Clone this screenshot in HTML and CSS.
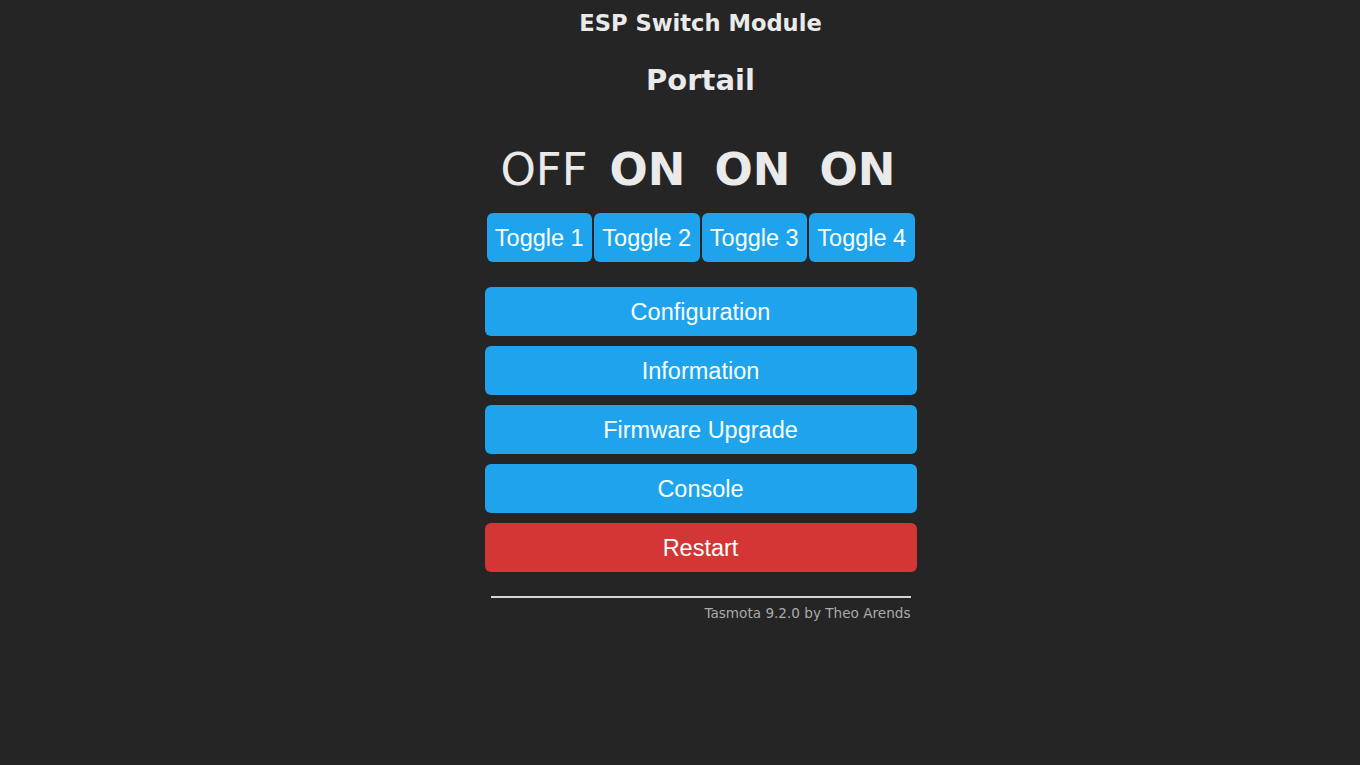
FILE: index.html
```html
<!DOCTYPE html>
<html lang="fr">
<head>
<meta charset="utf-8">
<title>ESP Switch Module - Portail</title>
<link rel="stylesheet" href="styles.css">
</head>
<body>
<div class="page">
  <div class="main">
    <header class="head">
      <h3 class="module">ESP Switch Module</h3>
      <h2 class="device">Portail</h2>
    </header>
    <div class="states">
      <div class="state off">OFF</div>
      <div class="state on">ON</div>
      <div class="state on">ON</div>
      <div class="state on">ON</div>
    </div>
    <div class="toggles">
      <button class="btn toggle">Toggle 1</button>
      <button class="btn toggle">Toggle 2</button>
      <button class="btn toggle">Toggle 3</button>
      <button class="btn toggle">Toggle 4</button>
    </div>
    <div class="menu">
      <button class="btn wide">Configuration</button>
      <button class="btn wide">Information</button>
      <button class="btn wide">Firmware Upgrade</button>
      <button class="btn wide">Console</button>
      <button class="btn wide danger">Restart</button>
    </div>
    <footer class="foot">
      <hr class="rule">
      <a class="credit" href="#">Tasmota 9.2.0 by Theo Arends</a>
    </footer>
  </div>
</div>
</body>
</html>
```

FILE: styles.css
```css
html, body {
  margin: 0;
  padding: 0;
  background: #252525;
  color: #eaeaea;
  font-family: "DejaVu Sans", Verdana, sans-serif;
}

.page {
  display: flex;
  justify-content: center;
  padding-left: 41px;
}

.main {
  width: 432px;
  display: flex;
  flex-direction: column;
}

.head {
  text-align: center;
}

.module {
  margin: 9px 0 0;
  font-size: 22.6px;
  line-height: 28px;
  font-weight: bold;
}

.device {
  margin: 26px 0 0;
  font-size: 29px;
  line-height: 34px;
  font-weight: bold;
}

.states {
  margin-top: 46px;
  display: grid;
  grid-template-columns: repeat(4, 1fr);
  column-gap: 2px;
  padding: 0 7.5px 0 6.5px;
  align-items: baseline;
}

.state {
  text-align: center;
  font-family: "DejaVu Sans", Verdana, sans-serif;
  font-size: 45px;
  line-height: 54px;
}

.state.off {
  padding-left: 3px;
}

.state.on {
  font-weight: bold;
}

.toggles {
  margin-top: 16px;
  display: grid;
  grid-template-columns: repeat(4, 1fr);
  column-gap: 2px;
  padding: 0 2px;
}

.btn {
  box-sizing: border-box;
  border: 0;
  border-radius: 6px;
  background: #1fa3ec;
  color: #faffff;
  font-family: "Liberation Sans", Arial, sans-serif;
  font-size: 23.5px;
  height: 49px;
  line-height: 47px;
  padding: 2px 0 0;
  width: 100%;
  cursor: pointer;
}

.menu {
  margin-top: 25px;
  display: flex;
  flex-direction: column;
  gap: 10px;
}

.btn.danger {
  background: #d43535;
}

.foot {
  margin-top: 24px;
  padding: 0 6px;
  display: flex;
  flex-direction: column;
  align-items: flex-end;
}

.rule {
  width: 100%;
  margin: 0;
  border: 0;
  height: 2px;
  background: #d6d6d6;
}

.credit {
  margin-top: 7px;
  color: #aaa;
  text-decoration: none;
  font-size: 13.6px;
  line-height: 16px;
}
```
